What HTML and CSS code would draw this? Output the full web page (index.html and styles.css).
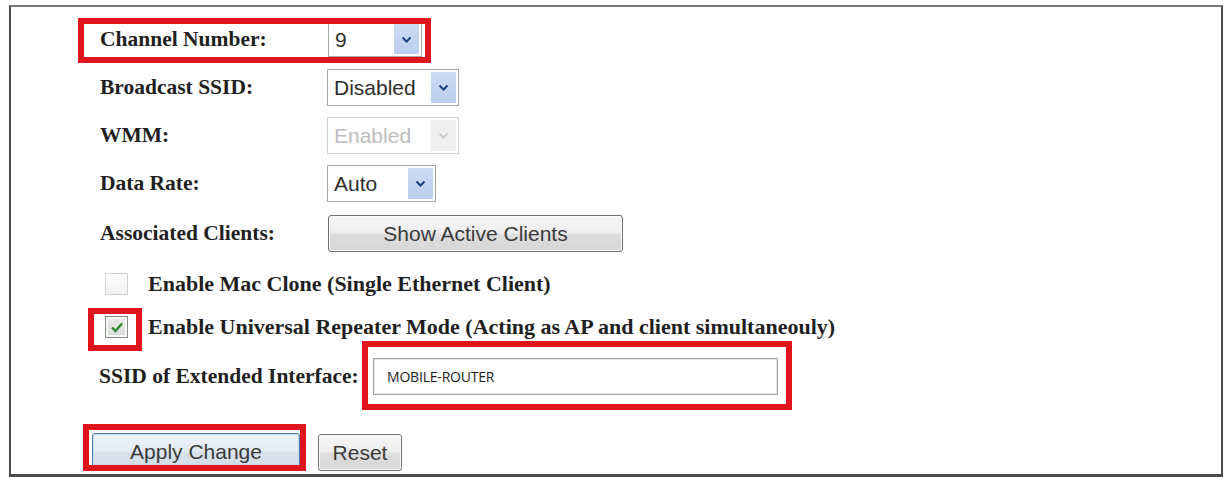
FILE: index.html
```html
<!DOCTYPE html>
<html lang="en">
<head>
<meta charset="utf-8">
<title>Wireless Settings</title>
<link rel="stylesheet" href="styles.css">
</head>
<body>
<div class="frame">
  <div class="form">
    <div class="row row-1 mark-channel">
      <span class="label">Channel Number:</span>
      <div class="select sel-channel"><span class="val">9</span><span class="arrow"><svg width="11" height="7" viewBox="0 0 11 7"><path d="M1.5 1.5 L5.5 5.5 L9.5 1.5" fill="none" stroke="#1d3f86" stroke-width="2"/></svg></span></div>
    </div>
    <div class="row row-2">
      <span class="label">Broadcast SSID:</span>
      <div class="select sel-wide"><span class="val">Disabled</span><span class="arrow"><svg width="11" height="7" viewBox="0 0 11 7"><path d="M1.5 1.5 L5.5 5.5 L9.5 1.5" fill="none" stroke="#1d3f86" stroke-width="2"/></svg></span></div>
    </div>
    <div class="row row-3">
      <span class="label">WMM:</span>
      <div class="select sel-wide is-disabled"><span class="val">Enabled</span><span class="arrow"><svg width="11" height="7" viewBox="0 0 11 7"><path d="M1.5 1.5 L5.5 5.5 L9.5 1.5" fill="none" stroke="#c4c4c4" stroke-width="1.6"/></svg></span></div>
    </div>
    <div class="row row-4">
      <span class="label">Data Rate:</span>
      <div class="select sel-auto"><span class="val">Auto</span><span class="arrow"><svg width="11" height="7" viewBox="0 0 11 7"><path d="M1.5 1.5 L5.5 5.5 L9.5 1.5" fill="none" stroke="#1d3f86" stroke-width="2"/></svg></span></div>
    </div>
    <div class="row row-5">
      <span class="label">Associated Clients:</span>
      <button class="btn btn-clients" type="button">Show Active Clients</button>
    </div>
    <div class="row row-6 check-row">
      <span class="check"></span>
      <span class="check-text">Enable Mac Clone (Single Ethernet Client)</span>
    </div>
    <div class="row row-7 check-row">
      <span class="mark mark-check"><span class="check is-checked"><svg width="20" height="20" viewBox="0 0 20 20"><path d="M5 10.5 L8.5 14 L15 6.5" fill="none" stroke="#2f8c35" stroke-width="2.4"/></svg></span></span>
      <span class="check-text">Enable Universal Repeater Mode (Acting as AP and client simultaneouly)</span>
    </div>
    <div class="row row-8">
      <span class="label label-ssid">SSID of Extended Interface:</span>
      <span class="mark mark-input"><input class="text-input" type="text" value="MOBILE-ROUTER"></span>
    </div>
    <div class="row row-9">
      <span class="mark mark-apply"><button class="btn btn-apply" type="button">Apply Change</button></span>
      <button class="btn btn-reset" type="button">Reset</button>
    </div>
  </div>
</div>
</body>
</html>
```

FILE: styles.css
```css
*, *::before, *::after { box-sizing: border-box; }

html, body {
  margin: 0;
  padding: 0;
  background: #ffffff;
}

.frame {
  margin: 5px 0 0 9px;
  width: 1214px;
  height: 472px;
  border: 2px solid #4c4c4c;
  border-top-color: #7a7a7a;
  border-bottom-width: 3px;
  overflow: hidden;
  background: #ffffff;
}

.form {
  display: flex;
  flex-direction: column;
  padding-top: 8px;
}

.row {
  display: flex;
  align-items: center;
  height: 48px;
  position: relative;
}

.row-4 { height: 49px; }
.row-5 { height: 51px; }
.row-6 { height: 50px; }
.row-7 { height: 36px; }
.row-8 { height: 63px; }
.row-9 {
  height: auto;
  align-items: flex-start;
  padding-top: 25px;
  padding-left: 81px;
  gap: 18px;
}

.label {
  font-family: "Liberation Serif", "Times New Roman", serif;
  font-weight: bold;
  font-size: 21.5px;
  color: #1f1f1f;
  margin-left: 89px;
  width: 227px;
  flex: none;
  white-space: nowrap;
}

.label-ssid {
  margin-left: 88px;
  width: 274px;
}

/* red annotation boxes laid over the content */
.mark-channel::after,
.mark::after {
  content: "";
  position: absolute;
  border: 6px solid #e0141c;
  pointer-events: none;
}

.mark-channel::after {
  left: 67px;
  top: 3px;
  width: 353px;
  height: 45px;
}

.mark {
  position: relative;
  display: inline-flex;
  flex: none;
}

.mark-check::after {
  left: -17px;
  top: -8px;
  width: 54px;
  height: 43px;
}

.mark-input::after {
  left: -11px;
  top: -17px;
  width: 430px;
  height: 69px;
}

.mark-apply::after {
  left: -9px;
  top: -9px;
  width: 223px;
  height: 47px;
}

/* select boxes */
.select {
  display: flex;
  align-items: center;
  justify-content: space-between;
  height: 37px;
  border: 1px solid #a7a7a7;
  background: #ffffff;
  padding: 2px 2px 2px 6px;
  font-family: "Liberation Sans", Arial, sans-serif;
  font-size: 21px;
  color: #2e2e2e;
  flex: none;
}

.sel-channel { width: 94px; height: 36px; margin-left: 1px; }
.sel-wide { width: 132px; }
.sel-auto { width: 109px; }

.select .val {
  line-height: 1;
}

.select .arrow {
  display: flex;
  align-items: center;
  justify-content: center;
  width: 25px;
  height: 100%;
  background: linear-gradient(#cddbf3, #bccff0);
}

.select.is-disabled {
  border-color: #d2d2d2;
  color: #bdbdbd;
}

.select.is-disabled .arrow {
  background: #efefef;
}

/* buttons */
.btn {
  font-family: "Liberation Sans", Arial, sans-serif;
  font-size: 21px;
  color: #3a3a3a;
  height: 37px;
  border: 1px solid #6f6f6f;
  border-radius: 3px;
  background: linear-gradient(#f6f6f6 0%, #ededed 48%, #dedede 52%, #d7d7d7 100%);
  box-shadow: inset 0 0 0 1px #fbfbfb;
  padding: 0;
  margin: 0;
  flex: none;
}

.btn-clients {
  width: 295px;
  margin-left: 1px;
}

.btn-apply {
  width: 208px;
  border-color: #4a7ea8;
  background: linear-gradient(#eef3f8 0%, #e4ebf2 48%, #d8e2ec 52%, #d2dde8 100%);
  box-shadow: inset 0 0 0 1px #c6def0;
}

.btn-reset {
  width: 84px;
  margin-top: 1px;
}

/* checkboxes */
.check-row .check {
  margin-left: 94px;
}

.check-row .mark-check {
  margin-left: 94px;
}

.check-row .mark-check .check {
  margin-left: 0;
}

.check {
  display: flex;
  align-items: center;
  justify-content: center;
  width: 23px;
  height: 22px;
  border: 1px solid #d0d0d0;
  background: linear-gradient(#fdfdfd, #f3f3f3);
  flex: none;
}

.check.is-checked {
  border-color: #868e86;
  background: linear-gradient(#e9ece9, #d9dcd9);
  box-shadow: inset 0 0 0 2px #f7f7f7;
}

.check-text {
  font-family: "Liberation Serif", "Times New Roman", serif;
  font-weight: bold;
  font-size: 22px;
  color: #1f1f1f;
  margin-left: 20px;
  white-space: nowrap;
}

/* text input */
.text-input {
  width: 405px;
  height: 37px;
  border: 1px solid #a3a3a3;
  box-shadow: inset 0 0 0 1px #e6e6e6;
  padding: 0 0 0 13px;
  margin: 0;
  font-family: "Open Sans", "Noto Sans", sans-serif;
  font-size: 14px;
  letter-spacing: -0.2px;
  color: #1c1c1c;
  background: #ffffff;
  outline: none;
}
```
